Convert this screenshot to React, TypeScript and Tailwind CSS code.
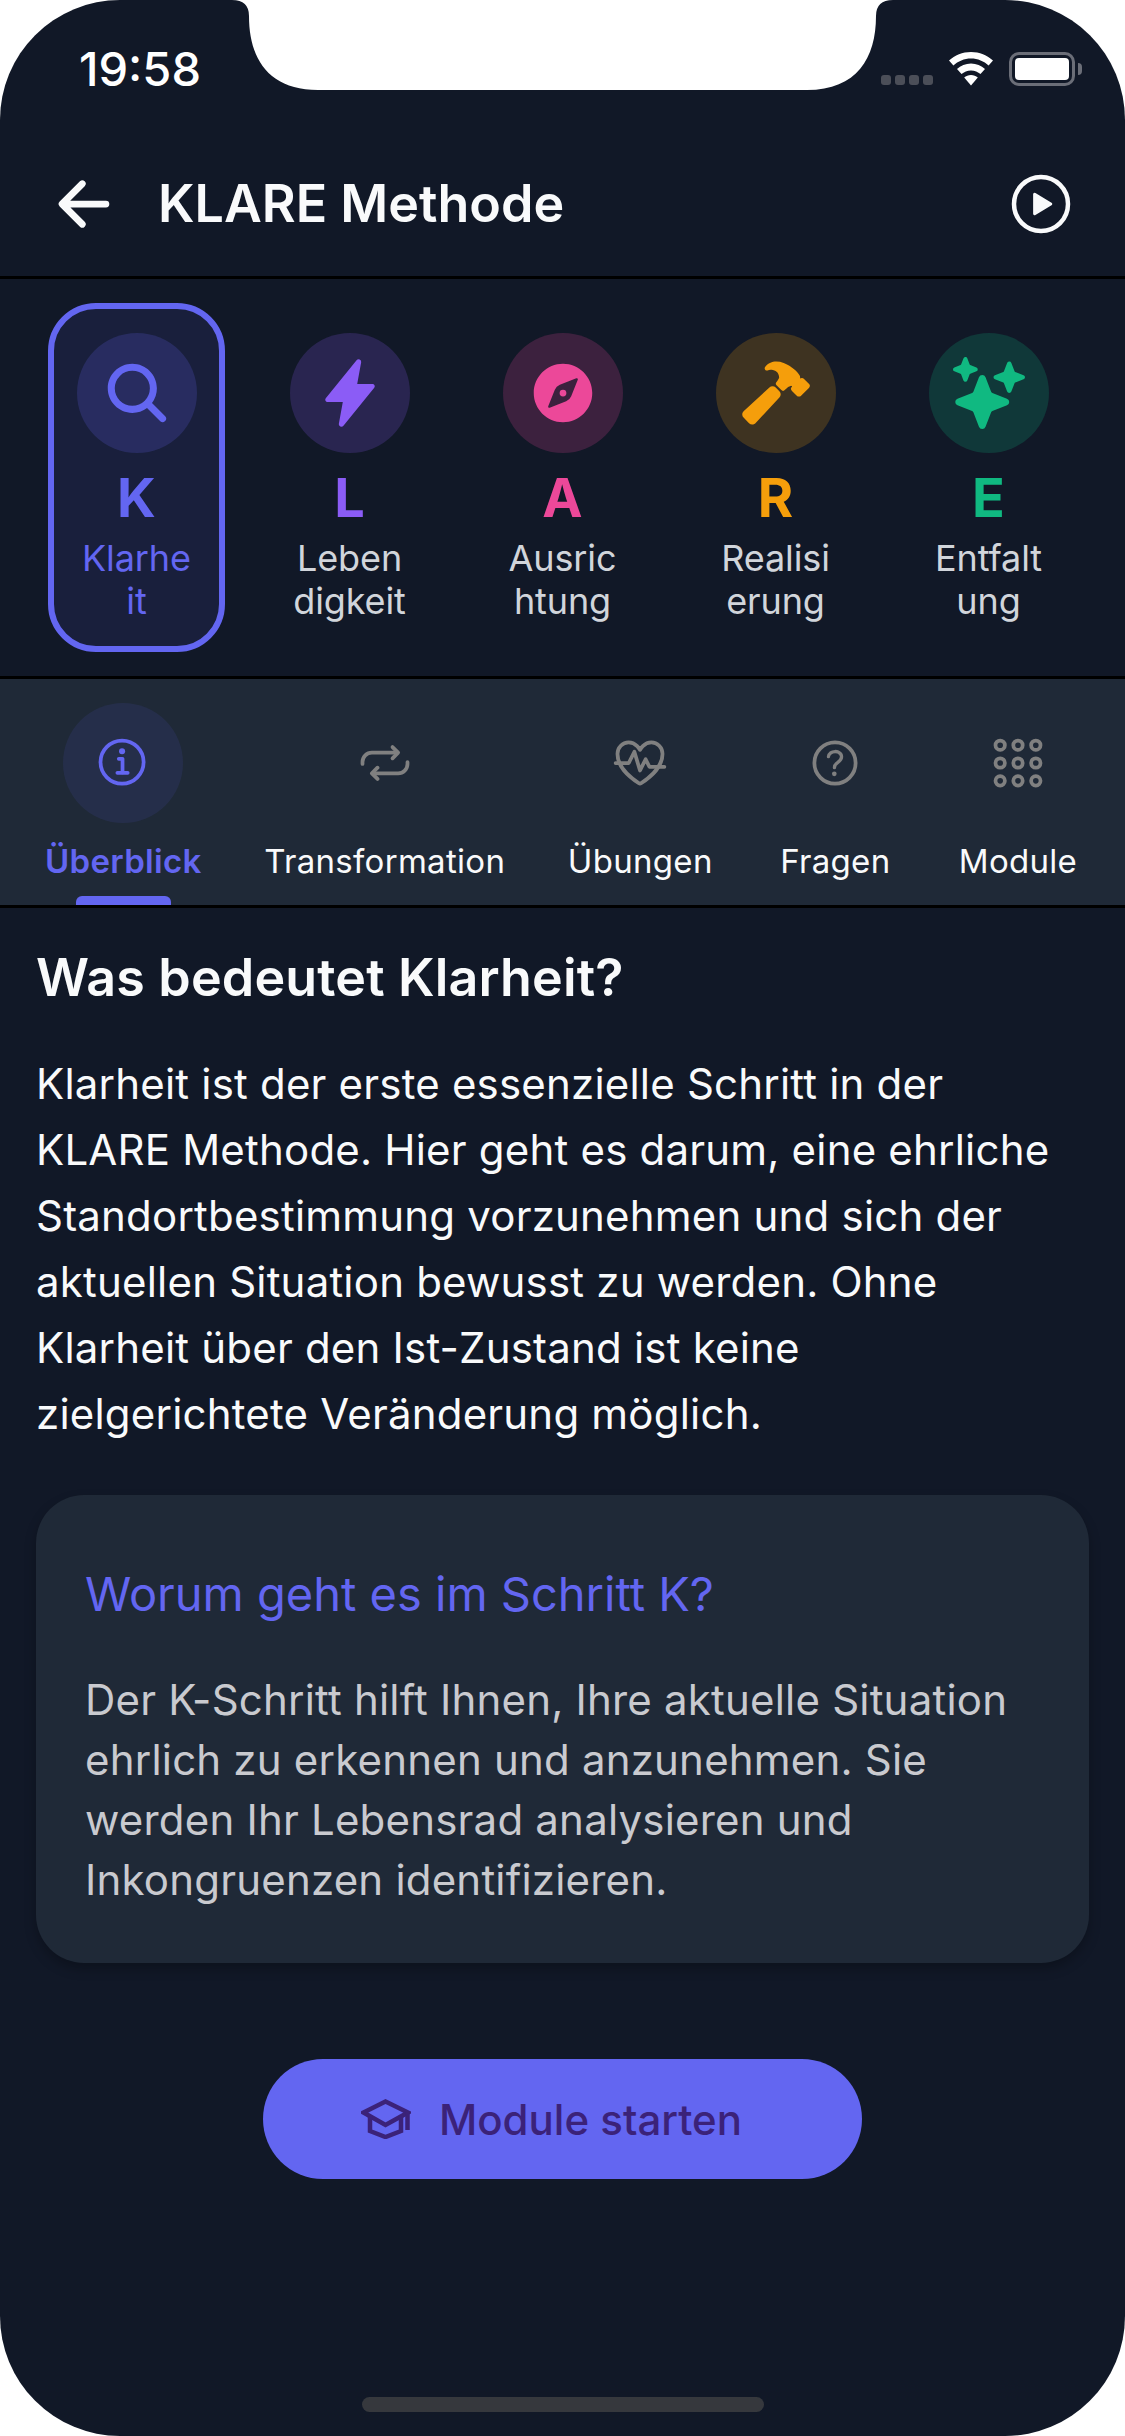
import {
  IoAppsOutline,
  IoArrowBack,
  IoCompass,
  IoFitnessOutline,
  IoFlash,
  IoHammer,
  IoHelpCircleOutline,
  IoInformationCircleOutline,
  IoPlayCircleOutline,
  IoRepeat,
  IoSearch,
  IoSparkles,
} from "react-icons/io5";

const steps = [
  { letter: "K", lines: ["Klarhe", "it"], Icon: IoSearch, circle: "bg-[#6366f1]/20", text: "text-[#6366f1]", active: true },
  { letter: "L", lines: ["Leben", "digkeit"], Icon: IoFlash, circle: "bg-[#8b5cf6]/20", text: "text-[#8b5cf6]", active: false },
  { letter: "A", lines: ["Ausric", "htung"], Icon: IoCompass, circle: "bg-[#ec4899]/20", text: "text-[#ec4899]", active: false },
  { letter: "R", lines: ["Realisi", "erung"], Icon: IoHammer, circle: "bg-[#f59e0b]/20", text: "text-[#f59e0b]", active: false },
  { letter: "E", lines: ["Entfalt", "ung"], Icon: IoSparkles, circle: "bg-[#10b981]/20", text: "text-[#10b981]", active: false },
];

const tabs = [
  { label: "Überblick", Icon: IoInformationCircleOutline, active: true },
  { label: "Transformation", Icon: IoRepeat, active: false },
  { label: "Übungen", Icon: IoFitnessOutline, active: false },
  { label: "Fragen", Icon: IoHelpCircleOutline, active: false },
  { label: "Module", Icon: IoAppsOutline, active: false },
];

function StatusBar() {
  return (
    <div className="flex h-[132px] shrink-0 items-start justify-between pl-[79px] pr-[43px] pt-[42px]">
      <span className="text-[47px] leading-[54px] font-medium text-white">19:58</span>
      <div className="flex items-end gap-[15px] pt-[10px]">
        <div className="mb-[1px] flex gap-[4px]">
          <span className="h-[10px] w-[10px] rounded-[3px] bg-[#4b4e58]" />
          <span className="h-[10px] w-[10px] rounded-[3px] bg-[#4b4e58]" />
          <span className="h-[10px] w-[10px] rounded-[3px] bg-[#4b4e58]" />
          <span className="h-[10px] w-[10px] rounded-[3px] bg-[#4b4e58]" />
        </div>
        <svg width="46" height="34" viewBox="0 0 46 34" fill="white">
          <path d="M23 0C14.5 0 6.8 3.2 1 8.6l4.4 5C10 9.3 16.2 6.6 23 6.6s13 2.7 17.6 7l4.4-5C39.2 3.2 31.5 0 23 0z" />
          <path d="M23 11.5c-5.4 0-10.3 2.1-14 5.500l4.500 5.100c2.500-2.300 5.800-3.700 9.500-3.700s7 1.400 9.500 3.700L37 17c-3.700-3.400-8.600-5.500-14-5.500z" />
          <path d="M23 23c-2.600 0-5 1-6.800 2.600L23 33.500l6.800-7.900C28 24 25.600 23 23 23z" />
        </svg>
        <div className="flex items-center gap-[3px]">
          <div className="flex h-[34px] w-[66px] items-center justify-center rounded-[10px] border-[3px] border-[#6b6e78]">
            <div className="h-[22px] w-[54px] rounded-[4px] bg-white" />
          </div>
          <div className="h-[12px] w-[4px] rounded-r-full bg-[#6b6e78]" />
        </div>
      </div>
    </div>
  );
}

export default function App() {
  return (
    <div className="relative h-[2436px] w-[1125px] bg-white font-[Inter,sans-serif]">
      <div className="flex h-full flex-col overflow-hidden rounded-[120px] bg-[#111827]">
        <StatusBar />

        {/* Header */}
        <div className="flex h-[147px] shrink-0 items-center border-b-[3px] border-black pl-[48px] pr-[19px]">
          <IoArrowBack size={72} className="text-[#f9fafb]" />
          <h1 className="ml-[38px] text-[52px] leading-[60px] font-semibold text-[#f9fafb]">KLARE Methode</h1>
          <IoPlayCircleOutline size={72} className="ml-auto mr-[29px] text-[#f9fafb]" />
        </div>

        {/* KLARE steps */}
        <div className="flex shrink-0 gap-[36px] border-b-[3px] border-black px-[48px] py-[24px]">
          {steps.map((s) => (
            <div
              key={s.letter}
              className={`flex h-[349px] w-[177px] flex-col items-center rounded-[48px] border-[6px] pt-[24px] ${
                s.active ? "border-[#6366f1] bg-[#6366f1]/10" : "border-transparent"
              }`}
            >
              <div className={`flex h-[120px] w-[120px] items-center justify-center rounded-full ${s.circle}`}>
                <s.Icon size={72} className={s.text} />
              </div>
              <span className={`mt-[12px] text-[54px] leading-[65px] font-bold ${s.text}`}>{s.letter}</span>
              <div className="mt-[7px] flex flex-col items-center">
                {s.lines.map((line) => (
                  <span
                    key={line}
                    className={`text-[36px] leading-[43px] tracking-[-0.1px] whitespace-nowrap ${s.active ? "text-[#6366f1]" : "text-[#d1d5db]"}`}
                  >
                    {line}
                  </span>
                ))}
              </div>
            </div>
          ))}
        </div>

        {/* Tabs */}
        <div className="flex h-[229px] shrink-0 justify-between border-b-[3px] border-black bg-[#1f2937] pl-[45px] pr-[47px] pt-[24px]">
          {tabs.map((t) => (
            <div key={t.label} className="relative flex h-full flex-col items-center">
              <div className={`flex h-[120px] w-[120px] items-center justify-center rounded-full ${t.active ? "bg-[#6366f1]/10" : ""}`}>
                <t.Icon size={60} className={t.active ? "text-[#6366f1]" : "text-[#808080]"} />
              </div>
              <span
                className={`mt-[18px] text-[33px] leading-[40px] tracking-[0.3px] whitespace-nowrap ${
                  t.active ? "font-semibold text-[#6366f1]" : "text-[#f9fafb]"
                }`}
              >
                {t.label}
              </span>
              {t.active && <div className="absolute bottom-0 h-[9px] w-[95px] rounded-t-[6px] bg-[#6366f1]" />}
            </div>
          ))}
        </div>

        {/* Content */}
        <div className="flex flex-col px-[36px] pt-[39px]">
          <h2 className="text-[52px] leading-[62px] tracking-[0.15px] font-semibold text-[#f9fafb]">Was bedeutet Klarheit?</h2>
          <p className="mt-[42px] text-[42px] leading-[66px] tracking-[0.2px] text-[#f9fafb]">
            Klarheit ist der erste essenzielle Schritt in der
            <br />
            KLARE Methode. Hier geht es darum, eine ehrliche
            <br />
            Standortbestimmung vorzunehmen und sich der
            <br />
            aktuellen Situation bewusst zu werden. Ohne
            <br />
            Klarheit über den Ist-Zustand ist keine
            <br />
            zielgerichtete Veränderung möglich.
          </p>

          <div className="mt-[48px] h-[468px] rounded-[48px] bg-[#1f2937] px-[49px] pt-[69px] shadow-[0_6px_12px_rgba(0,0,0,0.25)]">
            <h3 className="text-[47px] leading-[60px] text-[#6366f1]">Worum geht es im Schritt K?</h3>
            <p className="mt-[46px] text-[42px] leading-[60px] tracking-[0.2px] text-[#c9cacf]">
              Der K-Schritt hilft Ihnen, Ihre aktuelle Situation
              <br />
              ehrlich zu erkennen und anzunehmen. Sie
              <br />
              werden Ihr Lebensrad analysieren und
              <br />
              Inkongruenzen identifizieren.
            </p>
          </div>

          <button
            type="button"
            className="mx-auto mt-[96px] flex h-[120px] w-[599px] items-center justify-center gap-[28px] rounded-full bg-[#6366f1] pr-[22px] text-[42px] font-medium text-[#3b2279]"
          >
            <svg width="50" height="40" viewBox="0 0 50 40" fill="none" stroke="currentColor" strokeWidth="4.5">
              <path d="M24.500 2.500L2.500 13.500L24.500 26L47 13.500Z" />
              <path d="M9 17V32L24.500 38L40 32V18" />
              <path d="M46.500 13V31" />
            </svg>
            Module starten
          </button>
        </div>
      </div>

      {/* Notch */}
      <svg className="absolute left-0 top-0" width="1125" height="90" viewBox="0 0 1125 90" fill="white">
        <path d="M232 0Q249 0 249 16C249 58 268 90 318 90L807 90C857 90 876 58 876 16Q876 0 893 0Z" />
      </svg>

      {/* Home indicator */}
      <div className="absolute bottom-[24px] left-[362px] h-[15px] w-[402px] rounded-full bg-[#36383d]" />
    </div>
  );
}
